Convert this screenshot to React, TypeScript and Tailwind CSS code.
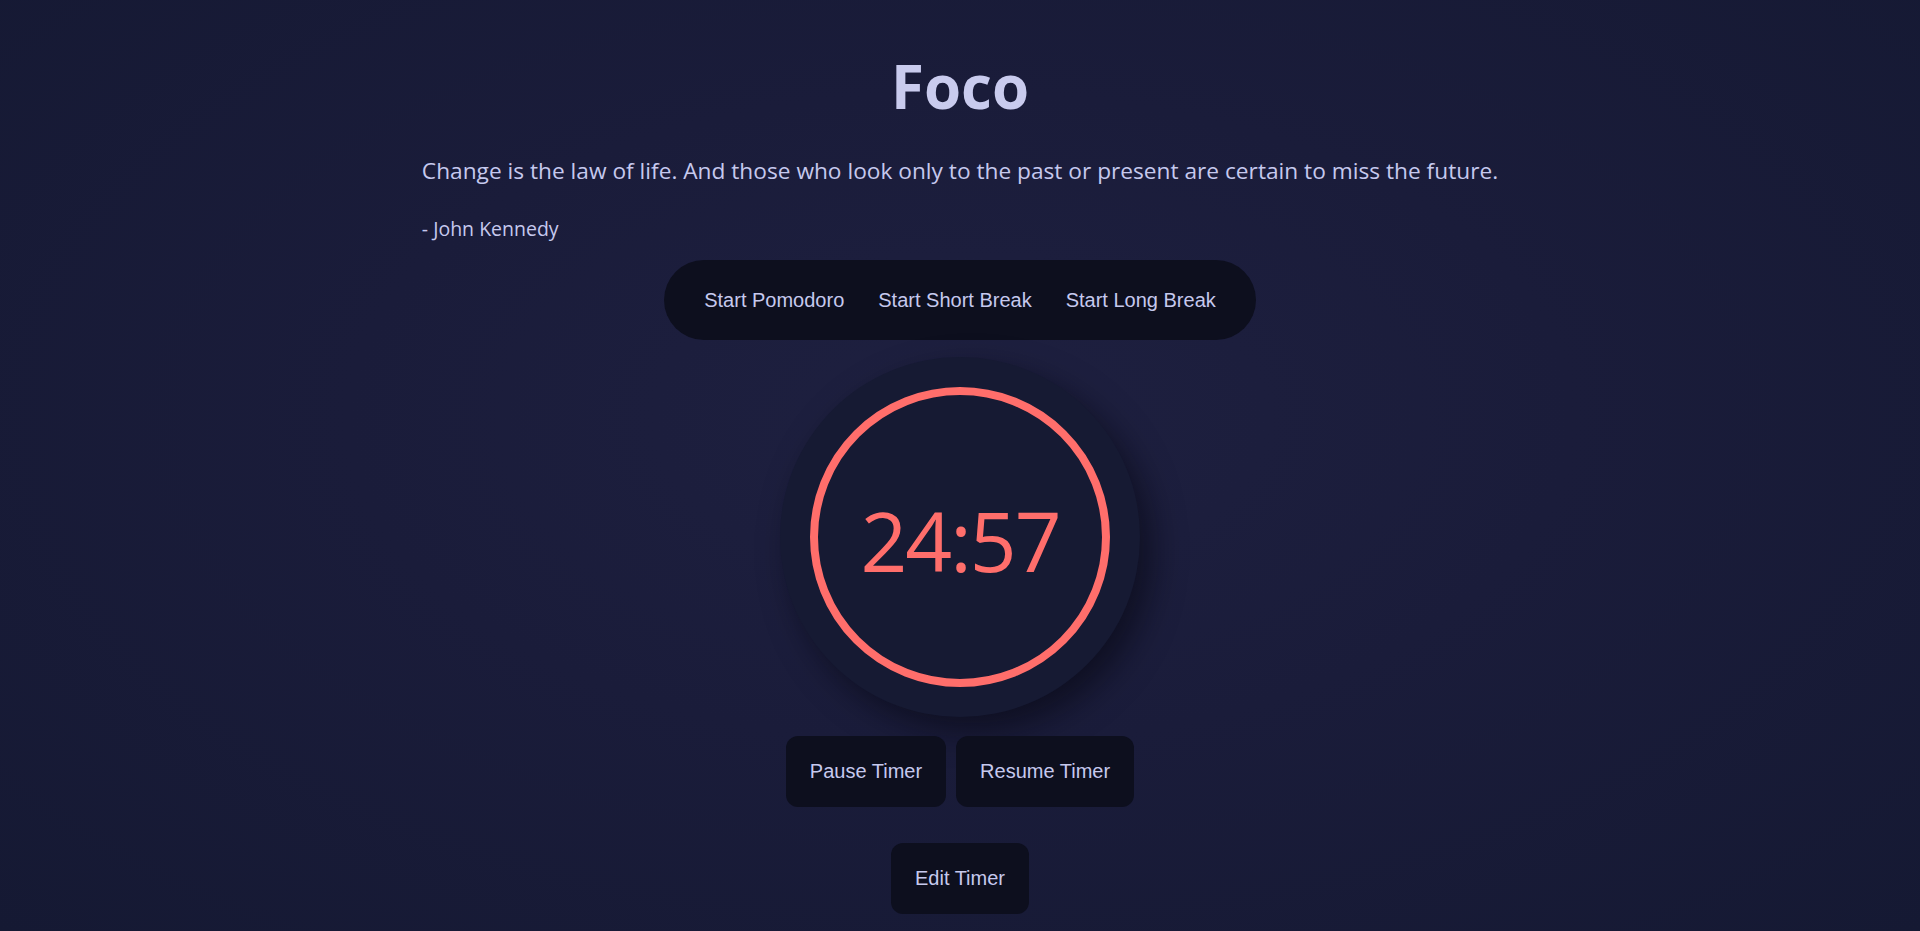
import React, { useState } from 'react';

const TABS = ['Start Pomodoro', 'Start Short Break', 'Start Long Break'];

const App: React.FC = () => {
  const [seconds] = useState<number>(24 * 60 + 57);

  const mm = String(Math.floor(seconds / 60)).padStart(2, '0');
  const ss = String(seconds % 60).padStart(2, '0');

  return (
    <div className="min-h-screen w-full bg-[radial-gradient(ellipse_at_50%_45%,#1e2040_0%,#1a1c3a_45%,#151933_100%)] font-['Open_Sans','Noto_Sans',sans-serif] text-[#c6c9ee]">
      <div className="flex flex-col items-center pt-[56px] pb-[17px]">
        <h1 className="text-[60px] font-bold leading-[60px] text-[#c9cbee]">Foco</h1>

        <div className="mt-[40px] w-fit">
          <p className="text-[22.7px] leading-[30px]">
            Change is the law of life. And those who look only to the past or present are certain to miss the future.
          </p>
          <p className="mt-[30px] text-[19.5px] leading-[26px]">- John Kennedy</p>
        </div>

        <nav className="mt-[18px] flex h-[80px] items-center rounded-full bg-[#0d0f1e] px-[23px] font-['Liberation_Sans',Arial,sans-serif]">
          {TABS.map(tab => (
            <button
              key={tab}
              className="px-[17px] text-[20px] leading-[23px] text-[#c6c9ee] focus:outline-none"
            >
              {tab}
            </button>
          ))}
        </nav>

        <div className="mt-[17px] flex h-[360px] w-[360px] items-center justify-center rounded-full bg-[#161a33] shadow-[12px_14px_32px_rgba(5,6,15,0.55)]">
          <div className="flex h-[300px] w-[300px] items-center justify-center rounded-full border-[8px] border-[#ff6e6b]">
            <span className="pt-[6px] text-[82px] font-normal leading-none tracking-[-2px] text-[#ff6e6b]">
              {mm}:{ss}
            </span>
          </div>
        </div>

        <div className="mt-[19px] flex gap-[10px] font-['Liberation_Sans',Arial,sans-serif]">
          <button className="rounded-xl bg-[#0d0f1e] px-6 py-6 text-[20px] leading-[23px] text-[#c6c9ee]">
            Pause Timer
          </button>
          <button className="rounded-xl bg-[#0d0f1e] px-6 py-6 text-[20px] leading-[23px] text-[#c6c9ee]">
            Resume Timer
          </button>
        </div>

        <button className="mt-[36px] rounded-xl bg-[#0d0f1e] px-6 py-6 font-['Liberation_Sans',Arial,sans-serif] text-[20px] leading-[23px] text-[#c6c9ee]">
          Edit Timer
        </button>
      </div>
    </div>
  );
};

export default App;
